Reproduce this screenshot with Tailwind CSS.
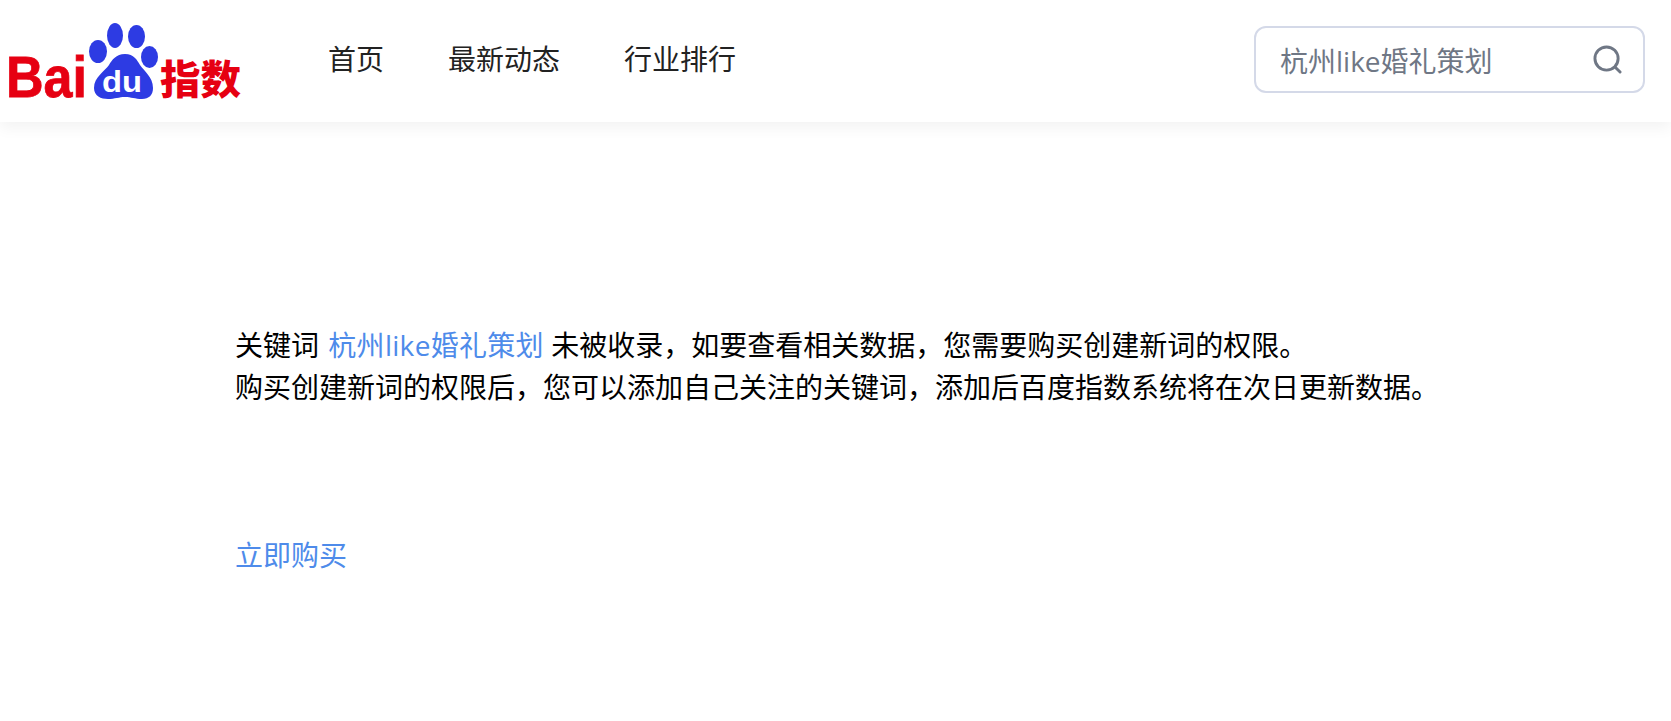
<!DOCTYPE html>
<html lang="zh-CN">
<head>
  <meta charset="UTF-8" />
  <meta name="viewport" content="width=device-width, initial-scale=1.0" />
  <title>百度指数</title>
  <script src="https://cdn.jsdelivr.net/npm/@tailwindcss/browser@4"></script>
</head>
<body class="bg-white text-black font-['Open_Sans','Noto_Sans_CJK_SC',sans-serif] text-[28px] leading-[42px]">
  <!-- Header -->
  <header class="h-[122px] flex items-start bg-white shadow-[0_6px_14px_rgba(0,0,0,0.05)]">
    <svg class="w-[248px] h-[122px] shrink-0" viewBox="0 0 248 122">
      <text x="6" y="97" textLength="81" lengthAdjust="spacingAndGlyphs" font-family="Liberation Sans" font-weight="700" font-size="58" fill="#e60012" stroke="#e60012" stroke-width="0.8">Bai</text>
      <ellipse cx="98" cy="51.5" rx="9" ry="11.5" fill="#2d3be3" />
      <ellipse cx="115" cy="35.5" rx="8" ry="12.5" fill="#2d3be3" />
      <ellipse cx="136.500" cy="36.500" rx="8.500" ry="11.500" fill="#2d3be3" />
      <ellipse cx="149.500" cy="57" rx="8.500" ry="11" fill="#2d3be3" />
      <path d="M125 54c-9 0-13 6-16 11-4 6-15 12-15 23 0 8 7 11 14 11 7 0 11-2 17-2 6 0 10 2 17 2 7 0 11-4 11-11 0-11-9-17-13-23-3-5-6-11-15-11z" fill="#2d3be3" />
      <text x="102" y="92" textLength="40" lengthAdjust="spacingAndGlyphs" font-family="Liberation Sans" font-weight="700" font-size="30" fill="#fff">du</text>
      <text x="160" y="94" textLength="81" lengthAdjust="spacingAndGlyphs" font-family="Noto Sans CJK SC" font-weight="900" font-size="40" fill="#e60012">指数</text>
    </svg>
    <nav class="ml-[80px] mt-[38px] flex gap-[64px] text-[#222]">
      <a>首页</a>
      <a>最新动态</a>
      <a>行业排行</a>
    </nav>
    <div class="ml-auto mr-[26px] mt-[26px] w-[391px] h-[67px] flex items-center justify-between pl-[24px] pr-[21px] border-2 border-[#d4d9e8] rounded-[12px] text-[#6f7785]">
      <span class="pt-[3px]">杭州like婚礼策划</span>
      <svg class="w-[29px] h-[29px]" viewBox="0 0 30 30" fill="none" stroke="#6f7785" stroke-width="3" stroke-linecap="round">
        <circle cx="14" cy="14" r="12" />
        <path d="M23 23l5 5" />
      </svg>
    </div>
  </header>

  <!-- Message -->
  <main class="pl-[235px] pt-[202px]">
    <p>关键词 <a class="ml-[2px] tracking-[0.3px] text-[#4e8bea]">杭州like婚礼策划</a> 未被收录，如要查看相关数据，您需要购买创建新词的权限。</p>
    <p>购买创建新词的权限后，您可以添加自己关注的关键词，添加后百度指数系统将在次日更新数据。</p>
    <a class="block mt-[126px] text-[#4e8bea]">立即购买</a>
  </main>
</body>
</html>
